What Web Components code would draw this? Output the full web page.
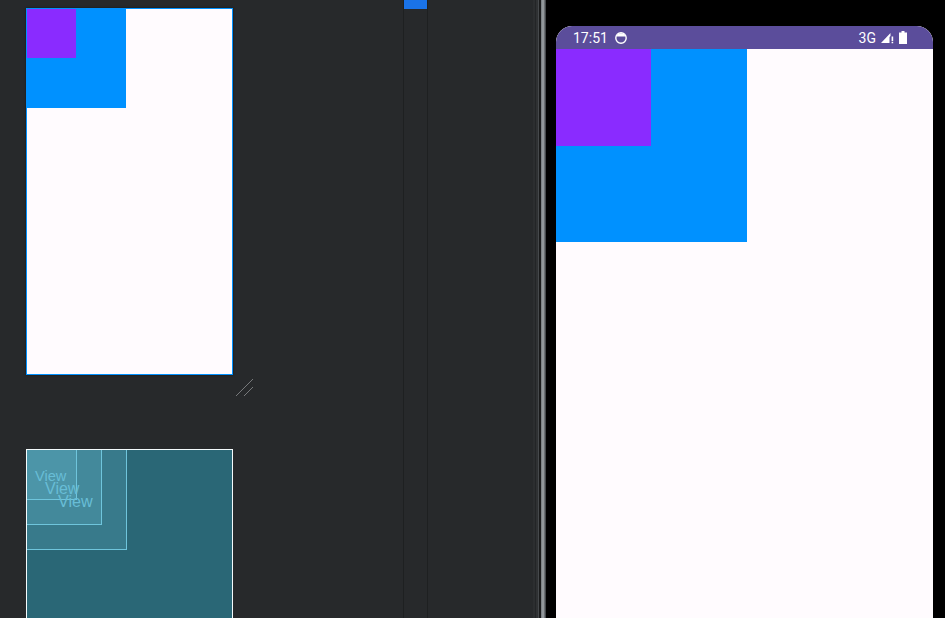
<!DOCTYPE html>
<html>
<head>
<meta charset="utf-8">
<title>Layout preview</title>
<style>
  html, body { margin: 0; height: 100%; overflow: hidden; background: #000; }
  body { font-family: "Liberation Sans", Arial, sans-serif; }
</style>
</head>
<body>
<studio-window>
  <design-surface slot="canvas"></design-surface>
  <blueprint-surface slot="canvas"></blueprint-surface>
  <device-preview slot="device"></device-preview>
</studio-window>

<script>
(function() {
  class StudioWindow extends HTMLElement {
    constructor() {
      super();
      this.attachShadow({ mode: "open" });
      this.shadowRoot.innerHTML = `
        <style>
          :host {
            display: flex;
            width: 945px;
            height: 618px;
            overflow: hidden;
            background: #000;
          }
          .canvas {
            position: relative;
            width: 403px;
            flex: none;
            background: #27292b;
          }
          .rail {
            width: 23px;
            flex: none;
            background: #27292b;
            border-left: 1px solid #1e2021;
            border-right: 1px solid #1e2021;
          }
          .rail-thumb {
            height: 9px;
            background: #1a73e8;
          }
          .gutter {
            width: 105px;
            flex: none;
            background: #27292b;
          }
          .edge {
            width: 13px;
            flex: none;
            background: linear-gradient(to right,
              #2c2e30 0 2px, #232527 2px 3px, #2f3133 3px 5px, #46494c 5px 6px,
              #1a1b1c 6px 8px, #7c8185 8px 9px, #92979b 9px 11px, #6b6f73 11px 12px, #44474a 12px 13px);
          }
          .bezel {
            flex: 1;
            min-width: 0;
          }
        </style>
        <div class="canvas"><slot name="canvas"></slot></div>
        <div class="rail"><div class="rail-thumb"></div></div>
        <div class="gutter"></div>
        <div class="edge"></div>
        <div class="bezel"><slot name="device"></slot></div>
      `;
    }
  }

  class DesignSurface extends HTMLElement {
    constructor() {
      super();
      this.attachShadow({ mode: "open" });
      this.shadowRoot.innerHTML = `
        <style>
          :host {
            position: absolute;
            left: 26px;
            top: 8px;
            width: 207px;
            height: 367px;
            box-sizing: border-box;
            display: block;
            background: #fffbfe;
            border: 1px solid #0091ff;
            box-shadow: 0 0 2px rgba(0, 0, 0, .5);
          }
          .outer { width: 99px; height: 99px; background: #0091ff; }
          .inner { width: 49px; height: 49px; background: #8a2bff; }
          .resize {
            position: absolute;
            left: 208px;
            top: 368px;
          }
        </style>
        <div class="outer"><div class="inner"></div></div>
        <svg class="resize" width="20" height="20" viewBox="0 0 20 20" fill="none" stroke="#77797b" stroke-width="1">
          <path d="M1 19 L18 2"/>
          <path d="M9 19 L18 10"/>
        </svg>
      `;
    }
  }

  class BlueprintSurface extends HTMLElement {
    constructor() {
      super();
      this.attachShadow({ mode: "open" });
      this.shadowRoot.innerHTML = `
        <style>
          :host {
            position: absolute;
            left: 26px;
            top: 449px;
            width: 207px;
            height: 367px;
            box-sizing: border-box;
            display: block;
            background: #2a6776;
            border: 1px solid #f4fbfd;
            font-family: "Liberation Sans", Arial, sans-serif;
          }
          .box {
            box-sizing: border-box;
            background: rgba(110, 190, 215, .22);
            border-right: 1px solid #6fc5dc;
            border-bottom: 1px solid #6fc5dc;
          }
          .b1 { width: 100px; height: 100px; }
          .b2 { width: 75px; height: 75px; }
          .b3 { width: 50px; height: 50px; }
          .label {
            position: absolute;
            color: #68bdd6;
            line-height: 1;
            white-space: nowrap;
          }
          .l3 { left: 8px; top: 19px; font-size: 14.6px; }
          .l2 { left: 18px; top: 31px; font-size: 16px; }
          .l1 { left: 31px; top: 43px; font-size: 16.2px; }
        </style>
        <div class="box b1"><div class="box b2"><div class="box b3"></div></div></div>
        <span class="label l3">View</span>
        <span class="label l2">View</span>
        <span class="label l1">View</span>
      `;
    }
  }

  class StatusBar extends HTMLElement {
    constructor() {
      super();
      this.attachShadow({ mode: "open" });
      this.shadowRoot.innerHTML = `
        <style>
          :host {
            display: flex;
            align-items: center;
            height: 23px;
            padding: 0 26px 0 17px;
            background: #5b4d9b;
            border-radius: 16px 16px 0 0;
            color: #fff;
            font: 14px Roboto, "Liberation Sans", sans-serif;
          }
          .left { display: flex; align-items: center; gap: 7px; }
          .right { display: flex; align-items: center; margin-left: auto; }
          svg { display: block; }
          .net { margin-right: 5px; }
          .signal { margin-right: 5px; }
        </style>
        <div class="left">
          <span class="time">17:51</span>
          <svg width="12" height="12" viewBox="0 0 12 12">
            <circle cx="6" cy="6" r="5.2" fill="none" stroke="#fff" stroke-width="1.4"/>
            <path d="M1.6 4.4a4.6 4.6 0 0 1 8.8 0z" fill="#fff"/>
          </svg>
        </div>
        <div class="right">
          <span class="net">3G</span>
          <svg class="signal" width="13" height="12" viewBox="0 0 13 12" fill="#fff">
            <path d="M0 11 L9.5 1 V4 L8.5 5 V11 Z"/>
            <path d="M10.6 4.5h1.6v4.5h-1.6z M10.6 9.8h1.6v1.4h-1.6z"/>
          </svg>
          <svg width="8" height="13" viewBox="0 0 8 13" fill="#fff">
            <path d="M2.5 0h3v1.4h2.5V13H0V1.4h2.5z"/>
          </svg>
        </div>
      `;
    }
  }

  class DevicePreview extends HTMLElement {
    constructor() {
      super();
      this.attachShadow({ mode: "open" });
      this.shadowRoot.innerHTML = `
        <style>
          :host {
            display: block;
            margin: 26px 12px 0 10px;
            height: 592px;
            background: #fffbfe;
            border-radius: 16px 16px 0 0;
            overflow: hidden;
          }
          .outer { width: 191px; height: 193px; background: #0091ff; }
          .inner { width: 95px; height: 97px; background: #8a2bff; }
        </style>
        <status-bar></status-bar>
        <div class="outer"><div class="inner"></div></div>
      `;
    }
  }

  customElements.define("studio-window", StudioWindow);
  customElements.define("design-surface", DesignSurface);
  customElements.define("blueprint-surface", BlueprintSurface);
  customElements.define("status-bar", StatusBar);
  customElements.define("device-preview", DevicePreview);
})();
</script>
</body>
</html>
